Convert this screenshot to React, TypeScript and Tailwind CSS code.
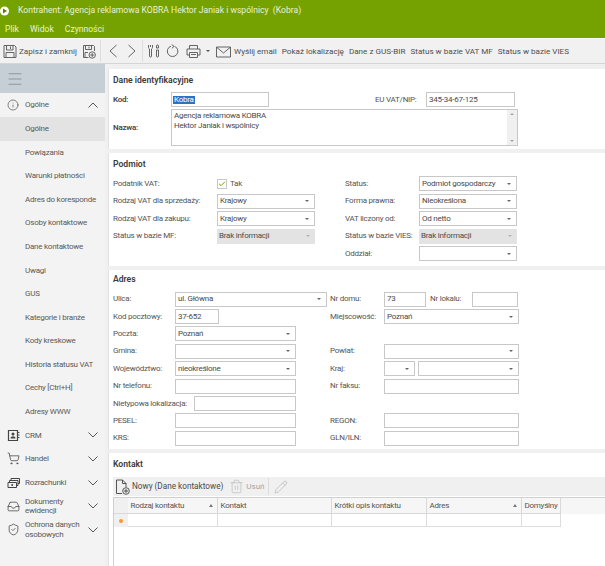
import { ReactNode } from "react";
import { Check, Inbox, Info, Menu, Pencil, ShieldCheck, ShoppingCart, Trash2 } from "lucide-react";

const subItems = [
  "Powiązania", "Warunki płatności", "Adres do koresponde", "Osoby kontaktowe", "Dane kontaktowe",
  "Uwagi", "GUS", "Kategorie i branże", "Kody kreskowe", "Historia statusu VAT", "Cechy [Ctrl+H]", "Adresy WWW",
];

const groups = [
  {
    label: "CRM",
    icon: (
      <svg viewBox="0 0 13 13" className="h-[13px] w-[13px]" fill="none" stroke="#444444" strokeWidth="1.2">
        <path d="M1.5 1.5h9v10h-9z" />
        <circle cx="6" cy="5" r="1.5" fill="#444444" stroke="none" />
        <path d="M3.5 9.5c0-3 5-3 5 0z" fill="#444444" stroke="none" />
        <path d="M11 3.5h1.5M11 6h1.5M11 8.5h1.5" strokeWidth="0.9" />
      </svg>
    ),
  },
  { label: "Handel", icon: <ShoppingCart className="h-[13px] w-[13px]" strokeWidth={1.4} /> },
  {
    label: "Rozrachunki",
    icon: (
      <svg viewBox="0 0 13 13" className="h-[13px] w-[13px]" fill="none" stroke="#444444" strokeWidth="1">
        <path d="M1 6.5h8.5v5H1z" />
        <path d="M2.5 6.5V4.5H11v5H9.5M4 4.5v-2h8.5v5H11" />
        <circle cx="5.2" cy="9" r="1" fill="#444444" stroke="none" />
      </svg>
    ),
  },
  { label: "Dokumenty\newidencji", icon: <Inbox className="h-[13px] w-[13px]" strokeWidth={1.4} /> },
  { label: "Ochrona danych\nosobowych", icon: <ShieldCheck className="h-[13px] w-[13px]" strokeWidth={1.4} /> },
];

const columns = [
  { name: "Rodzaj kontaktu", w: "w-[90px]", sort: true },
  { name: "Kontakt", w: "w-[114px]", sort: false },
  { name: "Krótki opis kontaktu", w: "w-[95px]", sort: false },
  { name: "Adres", w: "w-[95px]", sort: true },
  { name: "Domyślny", w: "w-[39px]", sort: false },
];

function SaveIcon({ plus }: { plus?: boolean }) {
  return (
    <svg viewBox="0 0 14 15" className="h-[15px] w-[14px] shrink-0" fill="none" stroke="#555555" strokeWidth="0.9">
      {plus ? (
        <>
          <path d="M6.5 13.5h-5v-12h10l1 1v4.5M3.5 1.5v4h6v-4M7 2.5V4.5M3 13.5V8.5h3" />
          <circle cx="10.2" cy="11" r="3.2" />
          <path d="M10.2 9v4M8.2 11h4" />
        </>
      ) : (
        <path d="M1 1.5h10.5l1.5 1.5v10.5H1zM3.5 1.5V6H10V1.5M7.5 2.5V5M3 13.5v-5h8v5" />
      )}
    </svg>
  );
}

function Caret({ light }: { light?: boolean }) {
  return <span className={`ml-auto mr-[3px] h-0 w-0 shrink-0 border-x-[2px] border-t-[2px] border-x-transparent ${light ? "border-t-[#b5b5b5]" : "border-t-[#666666]"}`} />;
}

function Fold({ up }: { up?: boolean }) {
  return (
    <svg viewBox="0 0 10 6" className="ml-auto mr-[7px] h-[6px] w-[10px] shrink-0" fill="none" stroke="#555555" strokeWidth="1">
      <path d={up ? "M.5 5.5 5 1l4.5 4.5" : "M.5.5 5 5 9.5.5"} />
    </svg>
  );
}

function Box({ w, value, select, disabled }: { w: string; value?: string; select?: boolean; disabled?: boolean }) {
  return (
    <div className={`flex h-[15px] shrink-0 items-center overflow-hidden whitespace-nowrap px-[2px] ${w} ${disabled ? "bg-[#e3e3e3]" : "border border-[#c8c8c8] bg-white"}`}>
      <span className="text-[#4a4a4a]">{value}</span>
      {select && <Caret light={disabled} />}
    </div>
  );
}

function Row({ label, w, children }: { label: string; w: string; children?: ReactNode }) {
  return (
    <div className="flex h-[17.4px] items-center">
      <span className={`shrink-0 whitespace-nowrap ${w}`}>{label}</span>
      {children}
    </div>
  );
}

function Panel({ title, h, pt, children }: { title: string; h: string; pt: string; children: ReactNode }) {
  return (
    <section className={`mb-[4px] border-l border-[#e2e2e2] bg-white pl-[4px] ${pt} ${h}`}>
      <h2 className="h-[14px] text-[8.6px] font-semibold leading-[14px] tracking-normal text-[#3a3a3a]">{title}</h2>
      {children}
    </section>
  );
}

function ToolText({ children }: { children: ReactNode }) {
  return <span className="mr-[5px] whitespace-nowrap">{children}</span>;
}

export default function App() {
  return (
    <div className="flex h-[566px] w-[605px] flex-col overflow-hidden bg-white text-[8px] leading-none tracking-[-0.03em] text-[#555555] [font-family:Roboto,sans-serif]">
      {/* Pasek tytulu */}
      <header className="h-[38px] bg-[#76a200] text-[8.6px] tracking-normal text-[#e8f2d0]">
        <div className="flex h-[21px] items-center">
          <svg viewBox="0 0 10 10" className="h-[10px] w-[10px]">
            <circle cx="4.5" cy="5" r="4.5" fill="#ffffff" />
            <path d="M3 2.6 7 5 3 7.4Z" fill="#5d7f00" />
          </svg>
          <span className="ml-[8px] whitespace-nowrap">Kontrahent: Agencja reklamowa KOBRA Hektor Janiak i wspólnicy&nbsp; (Kobra)</span>
        </div>
        <nav className="flex h-[17px] items-center gap-[11px] pl-[5px]">
          <span>Plik</span>
          <span>Widok</span>
          <span>Czynności</span>
        </nav>
      </header>

      {/* Pasek narzedzi */}
      <div className="mt-[1px] flex h-[25px] items-center border-b border-[#d5d5d5] bg-[#f1f1f1] pl-[3px] text-[8.1px] tracking-normal text-[#4f4f4f]">
        <SaveIcon />
        <span className="ml-[2px] w-[59px] whitespace-nowrap">Zapisz i zamknij</span>
        <span className="ml-[4px]"><SaveIcon plus /></span>
        <div className="ml-[4px] h-[22px] w-px bg-[#dcdcdc]" />
        <svg viewBox="0 0 10 14" className="ml-[7px] h-[14px] w-[10px]" fill="none" stroke="#555555" strokeWidth="0.9">
          <path d="M8.5 1 2 7l6.5 6" />
        </svg>
        <svg viewBox="0 0 10 14" className="ml-[9px] h-[14px] w-[10px]" fill="none" stroke="#555555" strokeWidth="0.9">
          <path d="M1.5 1 8 7l-6.5 6" />
        </svg>
        <div className="ml-[5px] h-[22px] w-px bg-[#dcdcdc]" />
        <svg viewBox="0 0 14 14" className="ml-[4px] h-[14px] w-[14px]" fill="none" stroke="#555555" strokeWidth="0.9">
          <path d="M1.5 1v2.5a2 2 0 0 0 1 1.5V12a1 1 0 0 0 2 0V5a2 2 0 0 0 1-1.5V1M3.5 1v2M10.5 1a1 1 0 0 1 1 1v2h-2V2a1 1 0 0 1 1-1ZM9.5 6h2v6a1 1 0 0 1-2 0Z" />
        </svg>
        <svg viewBox="0 0 14 14" className="ml-[5px] h-[14px] w-[14px]" fill="none" stroke="#555555" strokeWidth="0.9">
          <path d="M8.5 2.3A5.3 5.3 0 1 1 5 2.2M5.6.5 8 2.4 5.9 4.3" />
        </svg>
        <svg viewBox="0 0 15 15" className="ml-[6px] h-[15px] w-[15px]" fill="none" stroke="#555555" strokeWidth="0.9">
          <path d="M3.5 5V1.5h8V5M3.5 11H1V5h13v6h-2.5M3.5 8.5h8v5h-8zM5 10.5h5" />
        </svg>
        <span className="ml-[5px] h-0 w-0 border-x-[2px] border-t-[2px] border-x-transparent border-t-[#555555]" />
        <svg viewBox="0 0 15 15" className="ml-[6px] h-[15px] w-[15px]" fill="none" stroke="#555555" strokeWidth="0.9">
          <path d="M.5 3h14v10H.5zM1 3.5 7.5 9 14 3.5" />
        </svg>
        <span className="ml-[3px] flex items-center">
          <ToolText>Wyślij email</ToolText>
          <ToolText>Pokaż lokalizację</ToolText>
          <ToolText>Dane z GUS-BIR</ToolText>
          <ToolText>Status w bazie VAT MF</ToolText>
          <ToolText>Status w bazie VIES</ToolText>
        </span>
      </div>

      <div className="flex min-h-0 flex-1">
        {/* Menu boczne */}
        <aside className="w-[105px] shrink-0 bg-[#f3f3f3] text-[#5a5a5a]">
          <div className="flex h-[29px] items-center bg-[#c6cfd6] pl-[6px]">
            <Menu className="h-[18px] w-[18px] text-[#6d747a]" strokeWidth={0.8} />
          </div>
          <div className="flex h-[24px] items-center pl-[7px]">
            <Info className="h-[12px] w-[12px] text-[#444444]" strokeWidth={1.3} />
            <span className="ml-[6px]">Ogólne</span>
            <Fold up />
          </div>
          <div className="flex h-[23.5px] items-center bg-[#e3e3e3] pl-[25px]">Ogólne</div>
          <div className="pt-[0.5px]">
            {subItems.map((item) => (
              <div key={item} className="flex h-[23.55px] items-center whitespace-nowrap pl-[25px]">{item}</div>
            ))}
            {groups.map((g) => (
              <div key={g.label} className="flex h-[23.6px] items-center pl-[7px]">
                <span className="w-[12px] shrink-0 text-[#444444]">{g.icon}</span>
                <span className="ml-[6px] whitespace-pre leading-[9.5px]">{g.label}</span>
                <Fold />
              </div>
            ))}
          </div>
        </aside>

        {/* Formularz */}
        <main className="min-w-0 flex-1 bg-[#f0f0f0] pl-[3px] pt-[5px]">
          <Panel title="Dane identyfikacyjne" h="h-[80px]" pt="pt-[4px]">
            <div className="mt-[5px] flex h-[15px] items-center">
              <span className="w-[58px] font-semibold text-[#444444]">Kod:</span>
              <div className="flex h-[15px] w-[98px] items-center border border-[#c8c8c8] px-[1px]">
                <span className="bg-[#2f6fc4] px-px text-white">Kobra</span>
              </div>
              <span className="ml-[106px] w-[51px]">EU VAT/NIP:</span>
              <Box w="w-[89px]" value="345-34-67-125" />
            </div>
            <div className="mt-[2px] flex h-[37px] items-center">
              <span className="w-[58px] font-semibold text-[#444444]">Nazwa:</span>
              <div className="flex h-[37px] w-[347px] border border-[#c8c8c8]">
                <div className="flex-1 px-[2px] pt-[1px] leading-[10px] text-[#4a4a4a]">
                  Agencja reklamowa KOBRA<br />Hektor Janiak i wspólnicy
                </div>
                <div className="flex w-[10px] flex-col items-center justify-between bg-[#f0f0f0] py-[3px]">
                  <span className="h-0 w-0 border-x-[2px] border-b-[2px] border-x-transparent border-b-[#a5a5a5]" />
                  <span className="h-0 w-0 border-x-[2px] border-t-[2px] border-x-transparent border-t-[#a5a5a5]" />
                </div>
              </div>
            </div>
          </Panel>

          <Panel title="Podmiot" h="h-[113px]" pt="pt-[4px]">
            <div className="mt-[4.3px] flex">
              <div className="w-[232px]">
                <Row label="Podatnik VAT:" w="w-[104px]">
                  <span className="flex h-[10px] w-[10px] items-center justify-center border border-[#c8c8c8] bg-white">
                    <Check className="h-[8px] w-[8px] text-[#76a200]" strokeWidth={3} />
                  </span>
                  <span className="ml-[3px]">Tak</span>
                </Row>
                <Row label="Rodzaj VAT dla sprzedaży:" w="w-[104px]"><Box w="w-[98px]" value="Krajowy" select /></Row>
                <Row label="Rodzaj VAT dla zakupu:" w="w-[104px]"><Box w="w-[98px]" value="Krajowy" select /></Row>
                <Row label="Status w bazie MF:" w="w-[104px]"><Box w="w-[98px]" value="Brak informacji" select disabled /></Row>
              </div>
              <div>
                <Row label="Status:" w="w-[74px]"><Box w="w-[98px]" value="Podmiot gospodarczy" select /></Row>
                <Row label="Forma prawna:" w="w-[74px]"><Box w="w-[98px]" value="Nieokreślona" select /></Row>
                <Row label="VAT liczony od:" w="w-[74px]"><Box w="w-[98px]" value="Od netto" select /></Row>
                <Row label="Status w bazie VIES:" w="w-[74px]"><Box w="w-[98px]" value="Brak informacji" select disabled /></Row>
                <Row label="Oddział:" w="w-[74px]"><Box w="w-[98px]" select /></Row>
              </div>
            </div>
          </Panel>

          <Panel title="Adres" h="h-[179px]" pt="pt-[2px]">
            <div className="mt-[4.5px] flex">
              <div className="w-[217px] shrink-0">
                <Row label="Ulica:" w="w-[62px]"><Box w="w-[152px]" value="ul. Główna" select /></Row>
                <Row label="Kod pocztowy:" w="w-[62px]"><Box w="w-[44px]" value="37-652" /></Row>
                <Row label="Poczta:" w="w-[62px]"><Box w="w-[121px]" value="Poznań" select /></Row>
                <Row label="Gmina:" w="w-[62px]"><Box w="w-[121px]" select /></Row>
                <Row label="Województwo:" w="w-[62px]"><Box w="w-[121px]" value="nieokreślone" select /></Row>
                <Row label="Nr telefonu:" w="w-[62px]"><Box w="w-[121px]" /></Row>
                <Row label="Nietypowa lokalizacja:" w="w-[81px]"><Box w="w-[102px]" /></Row>
                <Row label="PESEL:" w="w-[62px]"><Box w="w-[121px]" /></Row>
                <Row label="KRS:" w="w-[62px]"><Box w="w-[121px]" /></Row>
              </div>
              <div>
                <Row label="Nr domu:" w="w-[54px]">
                  <Box w="w-[42px]" value="73" />
                  <span className="ml-[4px] w-[42px]">Nr lokalu:</span>
                  <Box w="w-[46px]" />
                </Row>
                <Row label="Miejscowość:" w="w-[54px]"><Box w="w-[135px]" value="Poznań" select /></Row>
                <div className="h-[17.4px]" />
                <Row label="Powiat:" w="w-[54px]"><Box w="w-[135px]" select /></Row>
                <Row label="Kraj:" w="w-[54px]">
                  <Box w="w-[31px]" select />
                  <span className="w-[3px]" />
                  <Box w="w-[101px]" select />
                </Row>
                <Row label="Nr faksu:" w="w-[54px]"><Box w="w-[135px]" /></Row>
                <div className="h-[17.4px]" />
                <Row label="REGON:" w="w-[54px]"><Box w="w-[135px]" /></Row>
                <Row label="GLN/ILN:" w="w-[54px]"><Box w="w-[135px]" /></Row>
              </div>
            </div>
          </Panel>

          <Panel title="Kontakt" h="h-[113px]" pt="pt-[4px]">
            <div className="mt-[6px] flex h-[19px] items-center bg-[#f0f0f0] pl-[2px] text-[8.2px] tracking-normal">
              <svg viewBox="0 0 15 16" className="h-[16px] w-[15px]" fill="none" stroke="#444444" strokeWidth="0.9">
                <path d="M7 14.5H1.5V1h6L11 4.5V8M7.5 1v3.5H11" />
                <circle cx="11" cy="12" r="3.3" />
                <path d="M11 10v4M9 12h4" />
              </svg>
              <span className="ml-[2px] whitespace-nowrap text-[#4a4a4a]">Nowy (Dane kontaktowe)</span>
              <Trash2 className="ml-[6px] h-[15px] w-[15px] text-[#b3b3b3]" strokeWidth={1} />
              <span className="ml-[2px] text-[8px] text-[#a3a3a3]">Usuń</span>
              <div className="ml-[4px] h-[17px] w-px bg-[#dddddd]" />
              <Pencil className="ml-[5px] h-[14px] w-[14px] text-[#aaaaaa]" strokeWidth={1} />
            </div>
            <div className="mt-[1px] h-[70px] border-l border-t border-[#d0d0d0]">
              <div className="flex h-[16px] bg-[#f6f6f6]">
                <div className="w-[14px] border-b border-[#d8d8d8] bg-[#f0f0f0]" />
                {columns.map((c) => (
                  <div key={c.name} className={`flex items-center overflow-hidden whitespace-nowrap border-b border-r border-[#d8d8d8] pl-[2.5px] ${c.w}`}>
                    {c.name}
                    {c.sort && <span className="ml-auto mr-[4px] h-0 w-0 border-x-[2.5px] border-b-[3px] border-x-transparent border-b-[#777777]" />}
                  </div>
                ))}
              </div>
              <div className="flex h-[13px]">
                <div className="flex w-[14px] items-center justify-center bg-[#f0f0f0]">
                  <span className="h-[4px] w-[4px] rounded-full bg-[#f59a32]" />
                </div>
                {columns.map((c) => (
                  <div key={c.name} className={`border-b border-r border-[#dddddd] ${c.w}`} />
                ))}
              </div>
            </div>
          </Panel>
        </main>
      </div>
    </div>
  );
}
